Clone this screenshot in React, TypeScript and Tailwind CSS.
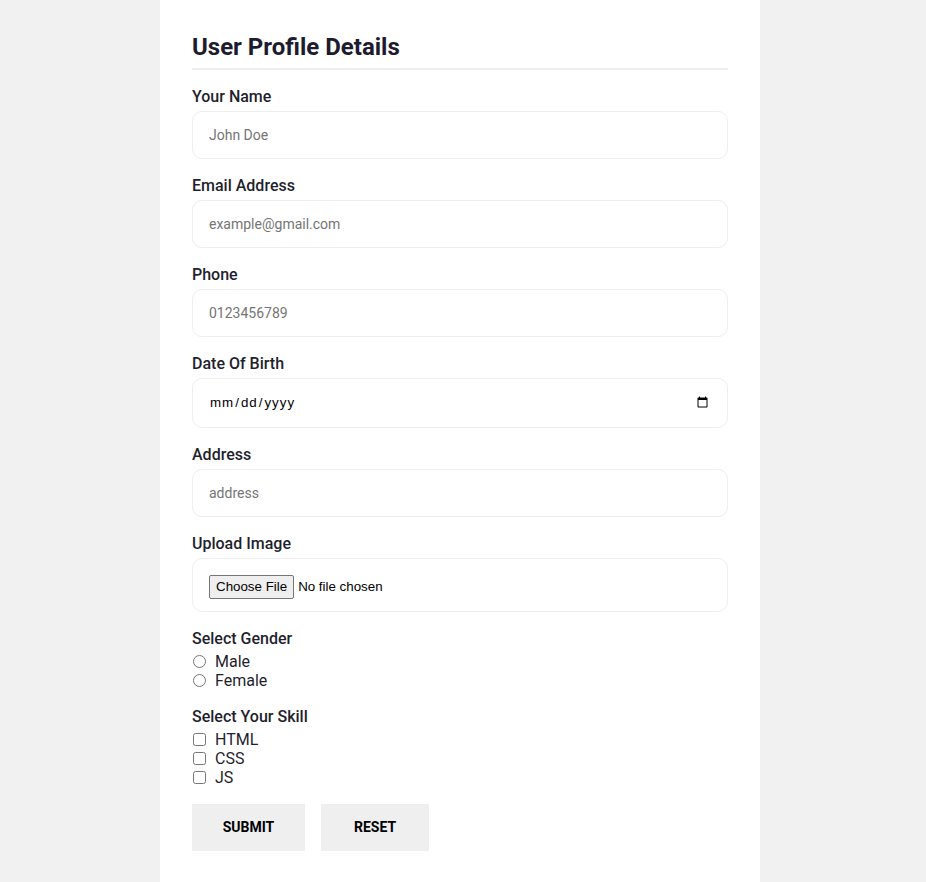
import React from "react";

const labelCls = "block text-[16px] leading-[24px] font-medium text-[#1f1f2e] pt-[1px] mb-[2px]";
const inputCls =
  "block w-full h-[48px] border border-[#eeeeee] rounded-[10px] px-4 text-[14px] text-[#1f1f2e] placeholder:text-[#757575] outline-none bg-white";

function Field({ label, children }: { label: string; children: React.ReactNode }) {
  return (
    <div className="mt-[14px]">
      <label className={labelCls}>{label}</label>
      {children}
    </div>
  );
}

export default function App() {
  return (
    <div className="min-h-[882px] bg-[#f1f1f1]" style={{ fontFamily: "Roboto, 'Liberation Sans', sans-serif" }}>
      <div className="ml-[160px] w-[600px] min-h-[882px] bg-white px-8 pt-[28px] pb-[40px]">
        <h2 className="text-[24px] leading-[38px] font-bold text-[#1c1c2e] pb-[2px] border-b-2 border-[#eeeeee]">
          User Profile Details
        </h2>
        <Field label="Your Name">
          <input className={inputCls} placeholder="John Doe" />
        </Field>
        <Field label="Email Address">
          <input className={inputCls} placeholder="example@gmail.com" />
        </Field>
        <Field label="Phone">
          <input className={inputCls} placeholder="0123456789" />
        </Field>
        <Field label="Date Of Birth">
          <input
            type="date"
            className="block w-full h-[50px] border border-[#eeeeee] rounded-[10px] pl-4 pr-4 text-[13.33px] tracking-[1px] text-black outline-none bg-white"
            style={{ fontFamily: "Arial, 'Liberation Sans', sans-serif" }}
          />
        </Field>
        <Field label="Address">
          <input className={inputCls} placeholder="address" />
        </Field>
        <Field label="Upload Image">
          <div className="h-[54px] border border-[#eeeeee] rounded-[10px] pl-4 pt-[15px]">
            <input
              type="file"
              className="text-[13.33px] text-black file:mr-[4px] file:border file:border-[#767676] file:bg-[#efefef] file:rounded-[2px] file:px-[6px] file:py-[1px] file:text-black"
              style={{ fontFamily: "Arial, 'Liberation Sans', sans-serif" }}
            />
          </div>
        </Field>
        <div className="mt-[14px]">
          <div className="text-[16px] leading-[24px] font-medium text-[#1f1f2e] pt-[1px] mb-[1px]">Select Gender</div>
          {["Male", "Female"].map((g) => (
            <label key={g} className="flex items-center h-[19px] text-[16px] text-[#1f1f2e]">
              <input type="radio" name="gender" className="ml-[1px] mr-[9px] w-[13px] h-[13px]" />
              {g}
            </label>
          ))}
        </div>
        <div className="mt-[14px]">
          <div className="text-[16px] leading-[24px] font-medium text-[#1f1f2e] pt-[1px] mb-[1px]">Select Your Skill</div>
          {["HTML", "CSS", "JS"].map((s) => (
            <label key={s} className="flex items-center h-[19px] text-[16px] text-[#1f1f2e]">
              <input type="checkbox" className="ml-[1px] mr-[9px] w-[13px] h-[13px]" />
              {s}
            </label>
          ))}
        </div>
        <div className="mt-[17px] flex gap-4">
          <button className="w-[113px] h-[47px] bg-[#efefef] text-[14px] font-bold text-black">SUBMIT</button>
          <button className="w-[108px] h-[47px] bg-[#efefef] text-[14px] font-bold text-black">RESET</button>
        </div>
      </div>
    </div>
  );
}
